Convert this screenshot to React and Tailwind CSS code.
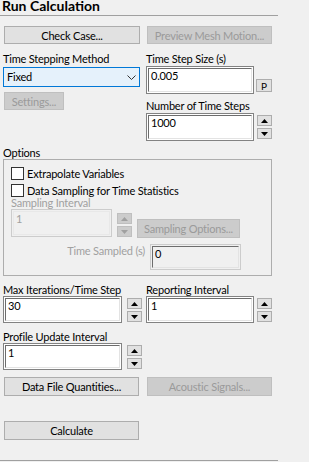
import React from "react";

const Btn = ({ className = "", disabled, children }) => (
  <div
    className={`flex items-center justify-center border text-[11px] leading-none whitespace-nowrap ${
      disabled
        ? "bg-[#cccccc] border-[#bfbfbf] text-[#9a9a9a]"
        : "bg-[#e1e1e1] border-[#adadad] text-black"
    } ${className}`}
  >
    {children}
  </div>
);

const Tri = ({ up, disabled }) => (
  <svg width="7" height="4" viewBox="0 0 7 4">
    <path
      d={up ? "M0 4 L3.5 0 L7 4 Z" : "M0 0 L7 0 L3.5 4 Z"}
      fill={disabled ? "#a0a0a0" : "#000"}
    />
  </svg>
);

const Spin = ({ disabled, className = "" }) => {
  const cls = disabled
    ? "bg-[#cccccc] border-[#bfbfbf]"
    : "bg-[#e1e1e1] border-[#adadad]";
  return (
    <div className={`flex flex-col gap-[2px] ${className}`}>
      <div className={`w-[15px] h-[11px] border flex items-center justify-center ${cls}`}>
        <Tri up disabled={disabled} />
      </div>
      <div className={`w-[15px] h-[11px] border flex items-center justify-center ${cls}`}>
        <Tri disabled={disabled} />
      </div>
    </div>
  );
};

const Input = ({ className = "", value }) => (
  <div className={`border border-[#828282] bg-white p-px ${className}`}>
    <div className="h-full border border-t-[#6d6d6d] border-l-[#6d6d6d] border-r-[#e3e3e3] border-b-[#e3e3e3] bg-white pl-[2px] text-[11px] leading-[14px] text-black">
      {value}
    </div>
  </div>
);

const DisabledInput = ({ className = "", value }) => (
  <div className={`border border-[#cccccc] bg-[#f0f0f0] p-px ${className}`}>
    <div className="h-full border border-[#e8e8e8] pl-[2px] text-[11px] leading-[14px] text-[#a0a0a0]">
      {value}
    </div>
  </div>
);

const ReadInput = ({ className = "", value }) => (
  <div className={`border border-[#cccccc] bg-[#f0f0f0] p-px ${className}`}>
    <div className="h-full border border-t-[#6d6d6d] border-l-[#6d6d6d] border-r-[#e3e3e3] border-b-[#e3e3e3] pl-[2px] text-[11px] leading-[14px] text-black">
      {value}
    </div>
  </div>
);

const Check = ({ label, className = "" }) => (
  <div className={`flex items-center h-[13px] ${className}`}>
    <div className="w-[13px] h-[13px] border border-[#333333] bg-white" />
    <span className="ml-[3px] text-[11px] leading-[14px] whitespace-nowrap">{label}</span>
  </div>
);

export default function App() {
  return (
    <div className="w-[309px] h-[462px] bg-[#f0f0f0] overflow-hidden font-[family-name:Lato,sans-serif] text-black tracking-[-0.2px]">
      <div className="w-[278px] flex flex-col">
        <div className="h-[15px] pl-[2px] text-[14px] font-bold leading-[12px] tracking-normal">
          Run Calculation
        </div>
        <div className="h-px bg-[#a0a0a0]" />

        <div className="flex mt-[10px] pl-[4px]">
          <Btn className="w-[136px] h-[18px]">Check Case...</Btn>
          <Btn disabled className="ml-[7px] w-[125px] h-[18px]">
            Preview Mesh Motion...
          </Btn>
        </div>

        <div className="flex mt-[8px]">
          <div className="w-[146px] pl-[3px] flex flex-col">
            <div className="h-[14px] text-[11px] leading-[14px]">Time Stepping Method</div>
            <div className="mt-[1px] w-[137px] h-[20px] border border-[#0078d7] bg-[#e5f1fb] flex items-center justify-between pl-[3px] pr-[3px] text-[11px]">
              <span>Fixed</span>
              <svg width="9" height="5" viewBox="0 0 9 5">
                <path d="M0.5 0.5 L4.5 4.5 L8.5 0.5" fill="none" stroke="#333" strokeWidth="1" />
              </svg>
            </div>
            <Btn disabled className="mt-[5px] ml-[1px] w-[60px] h-[18px]">
              Settings...
            </Btn>
          </div>
          <div className="w-[126px] flex flex-col">
            <div className="h-[14px] text-[11px] leading-[14px]">Time Step Size (s)</div>
            <div className="flex">
              <Input className="w-[108px] h-[28px]" value="0.005" />
              <div className="ml-[2px] mt-[13px] w-[16px] h-[13px] border border-[#adadad] bg-[#e1e1e1] flex items-center justify-center text-[10px] leading-none">
                P
              </div>
            </div>
            <div className="mt-[5px] h-[14px] text-[11px] leading-[14px]">Number of Time Steps</div>
            <div className="flex">
              <Input className="w-[108px] h-[28px]" value="1000" />
              <Spin className="ml-[3px] mt-[2px]" />
            </div>
          </div>
        </div>

        <div className="mt-[5px] pl-[3px] h-[13px] text-[11px] leading-[13px]">Options</div>
        <div className="ml-[3px] w-[269px] h-[117px] border border-[#adadad] pt-[7px] pl-[7px] flex flex-col">
          <Check label="Extrapolate Variables" />
          <Check label="Data Sampling for Time Statistics" className="mt-[4px]" />
          <div className="h-[12px] text-[11px] leading-[12px] text-[#a0a0a0]">Sampling Interval</div>
          <div className="flex items-start">
            <DisabledInput className="w-[101px] h-[28px]" value="1" />
            <Spin disabled className="ml-[5px] mt-[4px]" />
            <Btn disabled className="ml-[5px] mt-[10px] w-[103px] h-[19px]">
              Sampling Options...
            </Btn>
          </div>
          <div className="flex items-start mt-[6px]">
            <div className="w-[134px] text-right text-[11px] leading-[14px] text-[#a0a0a0]">
              Time Sampled (s)
            </div>
            <ReadInput className="ml-[5px] w-[91px] h-[26px]" value="0" />
          </div>
        </div>

        <div className="flex mt-[8px]">
          <div className="w-[146px] pl-[3px] flex flex-col">
            <div className="h-[12px] text-[11px] leading-[12px] whitespace-nowrap">Max Iterations/Time Step</div>
            <div className="flex">
              <Input className="w-[119px] h-[27px]" value="30" />
              <Spin className="ml-[5px] mt-[2px]" />
            </div>
          </div>
          <div className="w-[126px] flex flex-col">
            <div className="h-[12px] text-[11px] leading-[12px]">Reporting Interval</div>
            <div className="flex">
              <Input className="w-[108px] h-[27px]" value="1" />
              <Spin className="ml-[3px] mt-[2px]" />
            </div>
          </div>
        </div>

        <div className="mt-[7px] pl-[3px] flex flex-col">
          <div className="h-[13px] text-[11px] leading-[13px]">Profile Update Interval</div>
          <div className="flex">
            <Input className="w-[119px] h-[27px]" value="1" />
            <Spin className="ml-[5px] mt-[2px]" />
          </div>
        </div>

        <div className="flex mt-[7px] pl-[4px]">
          <Btn className="w-[135px] h-[19px]">Data File Quantities...</Btn>
          <Btn disabled className="ml-[8px] w-[125px] h-[19px]">
            Acoustic Signals...
          </Btn>
        </div>

        <div className="flex mt-[25px] pl-[4px]">
          <Btn className="w-[135px] h-[19px]">Calculate</Btn>
        </div>

        <div className="mt-[20px] h-px bg-[#a0a0a0]" />
      </div>
    </div>
  );
}
